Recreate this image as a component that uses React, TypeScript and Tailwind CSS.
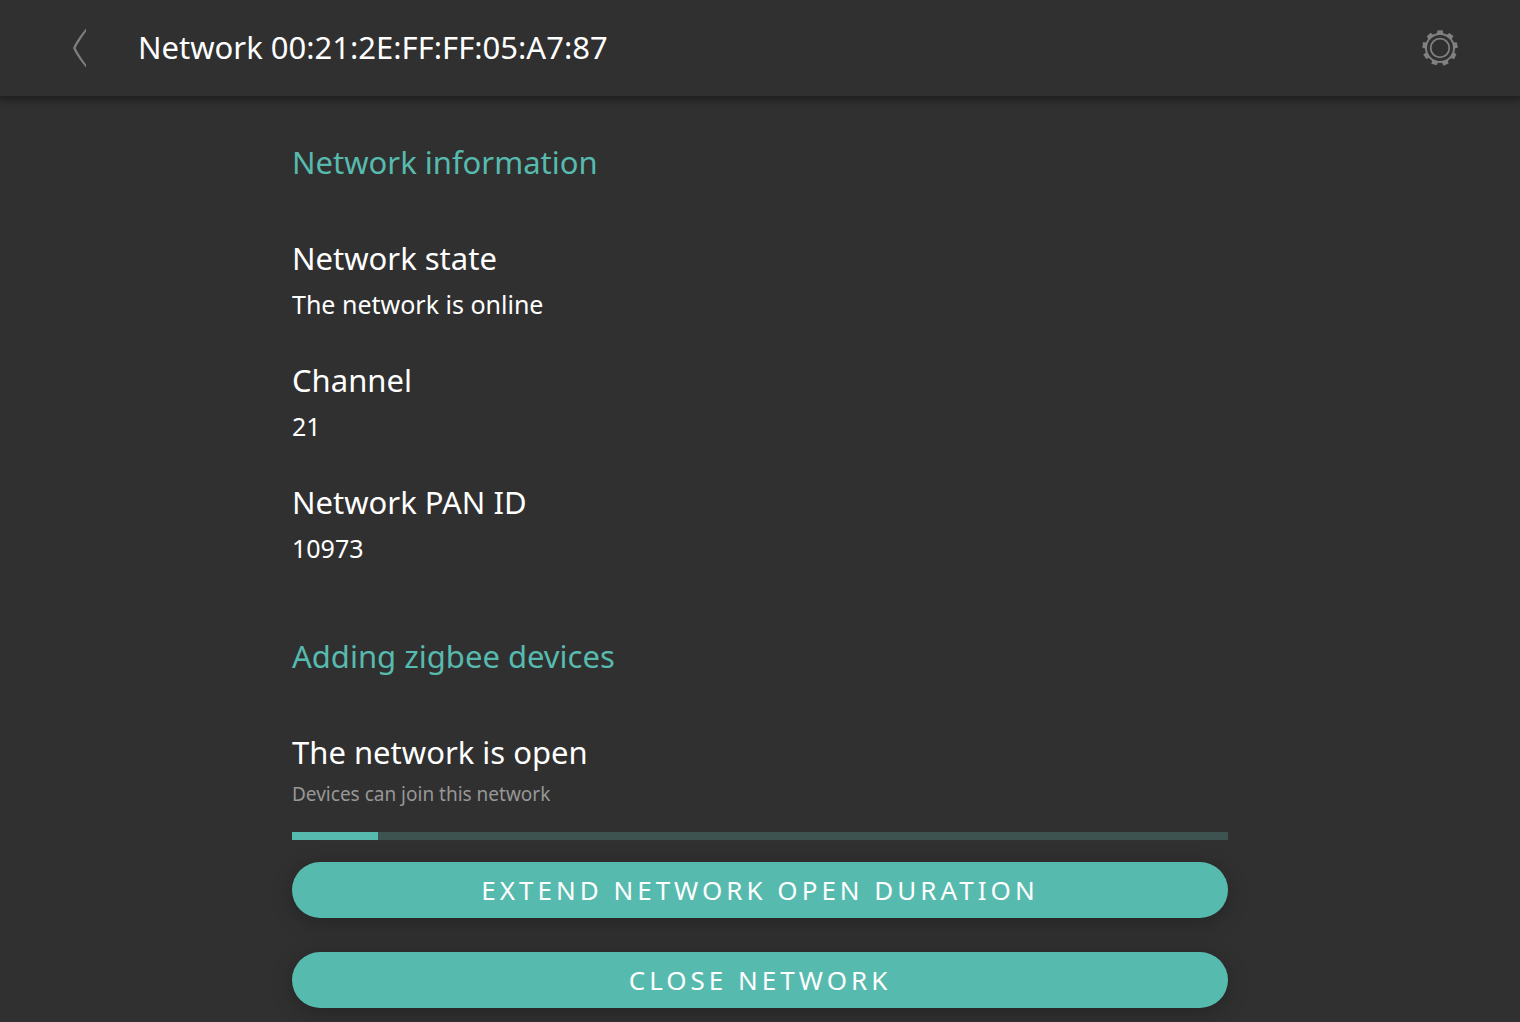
import { type PropsWithChildren } from "react";

const networkInfo = [
    { label: "Network state", value: "The network is online" },
    { label: "Channel", value: "21" },
    { label: "Network PAN ID", value: "10973" },
];

const openDuration = 120;
const remaining = 11;

const teeth = [0, 40, 80, 120, 160, 200, 240, 280, 320];

function BackIcon() {
    return (
        <svg width="48" height="48" viewBox="0 0 48 48" aria-hidden="true">
            <path d="M30 4.5V7.5C26.5 12.5 22.5 18 19.5 24C22.5 30 26.500 35.500 30 40.500V43.500C25 37.500 20 30.500 17 24C20 17.500 25 10.500 30 4.500Z" fill="#808080" />
        </svg>
    );
}

function GearIcon() {
    return (
        <svg width="48" height="48" viewBox="0 0 48 48" fill="none" aria-hidden="true">
            {teeth.map((angle) => (
                <path key={angle} d="M20.8 10.5L21.3 6.6L26.7 6.2L27.2 10.5Z" fill="#808080" transform={`rotate(${angle} 24 24)`} />
            ))}
            <circle cx="24" cy="24" r="14" stroke="#808080" strokeWidth="2" />
            <circle cx="24" cy="24" r="9.3" stroke="#808080" strokeWidth="1.8" />
        </svg>
    );
}

function SectionTitle(props: PropsWithChildren) {
    return <h2 className="mb-14 text-[31px] leading-10 text-[#57baae]">{props.children}</h2>;
}

function Button(props: PropsWithChildren) {
    return (
        <button
            type="button"
            className="h-14 w-full rounded-full bg-[#57baae] text-[26px] leading-8 tracking-[4px] text-white uppercase shadow-[0_4px_20px_rgba(0,0,0,0.25)]"
        >
            {props.children}
        </button>
    );
}

export default function App() {
    return (
        <div className="flex min-h-screen flex-col bg-[#303030] font-['Noto_Sans',sans-serif] text-white">
            <header className="z-10 flex h-24 items-center px-14 shadow-[0_2px_8px_2px_rgba(0,0,0,0.4)]">
                <button type="button" aria-label="Back">
                    <BackIcon />
                </button>
                <h1 className="ml-[34px] flex-1 pb-0.5 text-[31px] leading-10">Network 00:21:2E:FF:FF:05:A7:87</h1>
                <button type="button" aria-label="Settings">
                    <GearIcon />
                </button>
            </header>
            <main className="mx-auto w-full max-w-[1000px] px-8 pt-[46px] pb-3">
                <section>
                    <SectionTitle>Network information</SectionTitle>
                    <dl className="flex flex-col gap-10">
                        {networkInfo.map((item) => (
                            <div key={item.label} className="flex flex-col gap-[10px]">
                                <dt className="text-[31px] leading-10">{item.label}</dt>
                                <dd className="text-[25px] leading-8">{item.value}</dd>
                            </div>
                        ))}
                    </dl>
                </section>
                <section className="mt-[72px]">
                    <SectionTitle>Adding zigbee devices</SectionTitle>
                    <h3 className="text-[31px] leading-10">The network is open</h3>
                    <p className="mt-[10px] text-[19px] leading-6 text-[#979797]">Devices can join this network</p>
                    <div
                        role="progressbar"
                        aria-label="Remaining open time"
                        aria-valuemax={openDuration}
                        aria-valuenow={remaining}
                        className="mt-[26px] h-2 bg-[#3c5350]"
                    >
                        <div className="h-full bg-[#57baae]" style={{ width: `${(remaining / openDuration) * 100}%` }} />
                    </div>
                    <div className="mt-[22px] flex flex-col gap-[34px]">
                        <Button>Extend network open duration</Button>
                        <Button>Close network</Button>
                    </div>
                </section>
            </main>
        </div>
    );
}
